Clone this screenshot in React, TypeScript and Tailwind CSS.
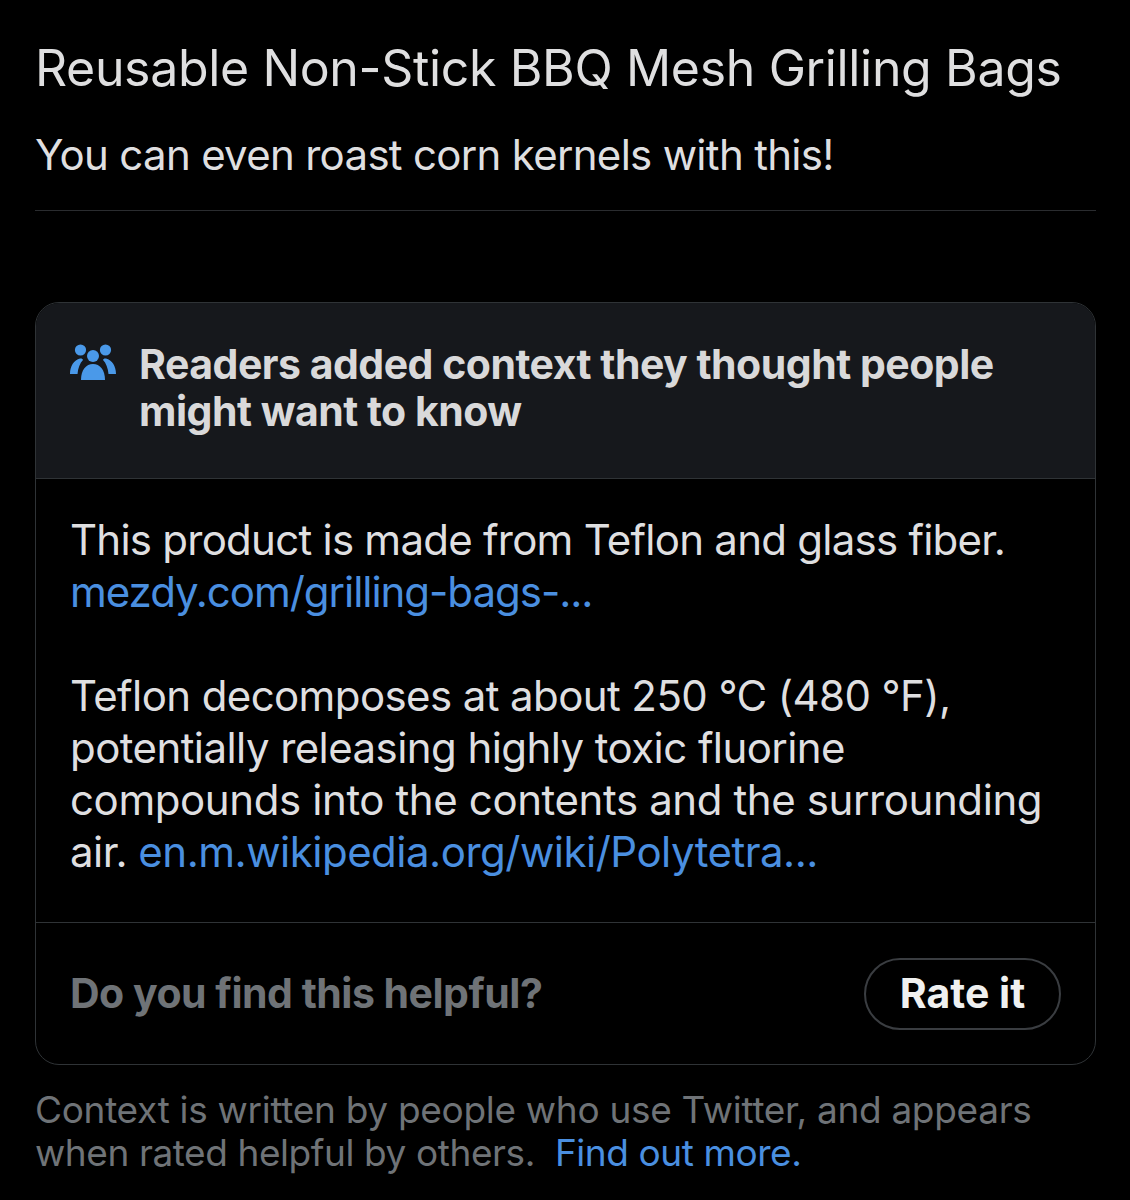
export default function App() {
  return (
    <div className="w-[1130px] h-[1200px] overflow-hidden bg-black pt-[36px] pl-[35px] pr-[34px] font-['Inter',sans-serif]">
      <h1 className="text-[50px] leading-[64px] font-normal text-[#dfdfe0] whitespace-nowrap tracking-[-0.35px]">Reusable Non-Stick BBQ Mesh Grilling Bags</h1>
      <p className="mt-[31px] text-[42px] leading-[48px] text-[#dfdfe0] whitespace-nowrap tracking-[-0.7px]">You can even roast corn kernels with this!</p>
      <div className="mt-[31px] h-px bg-[#2a2c2f]" />
      <div className="mt-[91px] h-[763px] rounded-[24px] border border-[#2f3336] overflow-hidden flex flex-col">
        <div className="h-[176px] shrink-0 bg-[#16181c] border-b border-[#2f3336] flex pl-[33px] pt-[38px] gap-[22px]">
          <svg className="w-[48px] h-[40px] mt-[2px] shrink-0" viewBox="0 0 48 40" fill="#4a99e9">
            <circle cx="11.5" cy="7" r="5.6" />
            <circle cx="36.5" cy="7" r="5.6" />
            <circle cx="24" cy="13" r="6" />
            <path d="M1 31c0-8 4-14 10-15.500 1.500-.3 3 .5 3 1.500-3 3-5 8-5.500 14z" />
            <path d="M47 31c0-8-4-14-10-15.500-1.500-.3-3 .5-3 1.500 3 3 5 8 5.500 14z" />
            <path d="M12 37c0-10 5-16 12-16s12 6 12 16z" />
          </svg>
          <p className="w-[900px] text-[41px] leading-[47px] font-bold text-[#d9d9da] tracking-[-0.5px]">Readers added context they thought people might want to know</p>
        </div>
        <div className="pl-[34px] pt-[35px] pb-[44px] text-[42px] leading-[52px] text-[#dfdfe0]">
          <p className="whitespace-nowrap tracking-[-0.75px]">This product is made from Teflon and glass fiber.</p>
          <p className="text-[#4a8fe0] whitespace-nowrap tracking-[-1.03px]">mezdy.com/grilling-bags-...</p>
          <p className="mt-[52px] whitespace-nowrap tracking-[-0.6px]">Teflon decomposes at about 250 °C (480 °F),</p>
          <p className="whitespace-nowrap tracking-[-0.57px]">potentially releasing highly toxic fluorine</p>
          <p className="whitespace-nowrap tracking-[-0.4px]">compounds into the contents and the surrounding</p>
          <p className="whitespace-nowrap tracking-[-0.5px]">air. <span className="text-[#4a8fe0]">en.m.wikipedia.org/wiki/Polytetra...</span></p>
        </div>
        <div className="flex-1 border-t border-[#2f3336] flex items-center justify-between pl-[34px] pr-[34px]">
          <span className="text-[41px] font-bold text-[#6f7377] tracking-[-0.5px]">Do you find this helpful?</span>
          <span className="w-[197px] h-[72px] rounded-full border-2 border-[#3a3d41] flex items-center justify-center text-[41px] font-bold text-[#eff0f0]">Rate it</span>
        </div>
      </div>
      <div className="mt-[23px] text-[37px] leading-[43px] text-[#6f7377]">
        <p className="whitespace-nowrap tracking-[-0.3px]">Context is written by people who use Twitter, and appears</p>
        <p className="whitespace-nowrap tracking-[-0.42px]">when rated helpful by others.&nbsp; <span className="text-[#4a8fe0]">Find out more.</span></p>
      </div>
    </div>
  );
}
